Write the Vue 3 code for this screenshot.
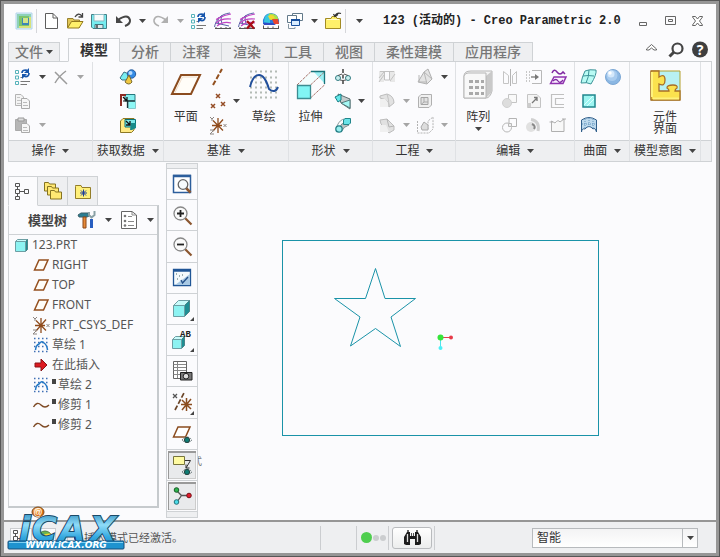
<script setup>
import { h, ref } from 'vue'

const P = (d, stroke, w = 1, extra = '') =>
  `<path d="${d}" fill="none" stroke="${stroke}" stroke-width="${w}" ${extra}/>`
const S = (d, fill, stroke = 'none', extra = '') =>
  `<path d="${d}" fill="${fill}" stroke="${stroke}" ${extra}/>`
const C = (x, y, r, fill, stroke = 'none') =>
  `<circle cx="${x}" cy="${y}" r="${r}" fill="${fill}" stroke="${stroke}"/>`

// A box seen from the front: corner, face size and depth.
const cube = (x, y, s, d = 4) =>
  S(`M${x} ${y + d}L${x + d} ${y}H${x + s + d}L${x + s} ${y + d}Z`, '#c9fbfa', '#6d9fa4') +
  S(`M${x + s} ${y + d}L${x + s + d} ${y}V${y + s}L${x + s} ${y + s + d}Z`, '#1e8e93', '#4a8589') +
  S(`M${x} ${y + d}H${x + s}V${y + s + d}H${x}Z`, '#8df3f2', '#6d9fa4')
const eye = (x, y) =>
  P(`M${x - 5} ${y}Q${x} ${y - 6} ${x + 5} ${y}Q${x} ${y + 5} ${x - 5} ${y}`, '#68787a', 1, 'stroke-dasharray="2 1"') +
  C(x, y, 2.6, '#0f7c74', '#26433f')
const plane = S('M3.500 15L8 5H17L12.500 15Z', '#fffdf8', '#95501f', 'stroke-width="1.500"')
const csys = P('M10 3V18M4 10.500H14M5 5.500L15 15.500M15 4.500L5 16', '#8f4b1c', 1.300) +
  P('M2 2l2 2 2-2M4 4v2M15.500 9l3 3m0-3l-3 3M2 15h4l-4 4h4', '#8b8480')
const mesh = P('M17 2C8 3 3 8 1.500 16M9 4Q7 8 9 13M6 6Q4 9 6 14M3 12L16 15', '#5a62a8') +
  P('M18 3C9 4 5 8 3 8.500M18 8Q8 7 3 12M18 12Q10 10 4 15', '#c044c4', 1.200) +
  P('M2 17.500H18M3 16v2M8 16v2M13 16v2M17 16v2', '#555')

const icons = {
  app: S('M2 2H18V18H2Z', '#d8eef6', '#b4d4ea') + S('M3 3H17V6H6V17H3Z', '#8ed1b8') + S('M5 5H15V16H5Z', '#7cc46c') + S('M8 7H15V14H8Z', '#3c85b6') + S('M9 7H14V12H9Z', '#d3e48a') + P('M5 16H16V6', '#d8e27a', 2),
  doc: S('M4.500 2.500H12L16.500 7V17.500H4.500Z', '#fff', '#5d5d5d') + P('M12 2.500V7H16.500', '#5d5d5d'),
  open: S('M2.500 16.500V7.500H8L9 9H14.500V16.500Z', '#e2c655', '#97802e') + S('M2.500 17L6.500 10.500H18L14 17Z', '#fff06a', '#92781d') + P('M10 6Q13 1 17 5M13.500 6H17.500V2', '#444', 1.300),
  save: S('M2.500 3.500H17.500V17.500H4L2.500 16Z', '#75edf0', '#447f87') + S('M5 3.500H15V10H5Z', '#f7fbfb', '#8bbbc3') + S('M6 13.500H14V17.500H6Z', '#dfe7e9', '#41747e') + P('M8 14V17', '#444', 1.500),
  undo: P('M5 9Q15 2 17 9Q17.500 13 12 15', '#474747', 2) + S('M3 5V12H10Z', '#474747'),
  redo: P('M15 9Q5 2 3 9Q2.500 13 8 15', '#b0b0b0', 1.600) + S('M17 5V12H10Z', '#b0b0b0'),
  regen: P('M2.500 3.500h3v3h-3zM2.500 9h3v3h-3zM2.500 14.500h3v3h-3z', '#57b3ba') + P('M7.500 10.500h2M7.500 14.500H17M7.500 17.500H14', '#777') + P('M9 6Q9 3 13 3L15 4M16 6Q16 10 12 9.500L10 8.500', '#1856ac', 1.700) + S('M16 1V6H11ZM9 12V7H14Z', '#1856ac'),
  mesh,
  meshx: mesh + P('M10 10L17 17.500M17 10L10 17.500', '#a90d16', 2.300),
  color: S('M2 13Q1 3 10 2Q19 3 18 13Z', '#287cdd') + S('M3 11Q3 3 9 2.500L9 12Z', '#39c8de') + S('M8 2.500Q17 2 17.500 9L10 9Z', '#a8e04a') + S('M7 5Q12 2 14 7L9 9Z', '#f2d82e') + S('M11 8L17 8L18 13H13Z', '#e8452f') + S('M2 12H12L15 14H3Z', '#314bc3') + P('M2 17.500H18M2.500 14.500v3M7 15.500v2M12 15.500v2M17.500 14.500v3', '#555'),
  windows: S('M7.500 2.500H17.500V9.500H7.500Z', '#fff', '#62798a') + S('M2.500 4.500H11.500V11.500H2.500Z', '#fff', '#62798a') + S('M6.500 8.500H14.500V14.500H6.500Z', '#d8ecff', '#174f9d') + P('M6 9H15', '#174f9d', 2) + P('M3.500 13V17.500H10V16', '#8596a2'),
  folder: S('M2.500 7.500H8L9 5.500H13L14 7.500H17.500V17.500H2.500Z', '#fff06a', '#a28b25') + P('M4 8.500H16', '#fffbd0') + P('M18 2.500Q14 1 12 5M10.500 3l1.500 2.500 3-2', '#333', 1.300),
  min: P('M5.500 11.500H12.500V14.500H5.500Z', '#666'),
  max: P('M4.500 5.500H14.500V13.500H4.500ZM7.500 8.500H11.500V10.500H7.500Z', '#666'),
  close: S('M4.500 5.500H7.500L9.500 8L11.500 5.500H14.500V6L11.500 10L14.500 14V14.500H11.500L9.500 12L7.500 14.500H4.500V14L7.500 10L4.500 6Z', '#fff', '#666'),
  up: S('M4.500 9V8L9.500 3.500L14.500 8V9H12L9.500 7L7 9Z', '#fff', '#666'),
  search: P('M8 11L3.500 15.500', '#444', 3) + `<circle cx="11.500" cy="7.500" r="5" fill="none" stroke="#444" stroke-width="2.200"/>`,
  help: C(10, 8.500, 8, '#3f3f3f') + `<text x="10" y="13.500" fill="#fff" font-size="14" font-weight="700" text-anchor="middle">?</text>`,

  cut: P('M4 5L16 17M15 4Q8 9 4 16', '#9b9b9b', 1.500),
  copy: S('M2.500 3.500H8L10.500 6V14.500H2.500Z', '#f4f4f4', '#b3b3b3') + P('M4 6.500h3M4 9.500h4M4 12.500h4', '#c4c4c4') + S('M8.500 7.500H14L16.500 10V17.500H8.500Z', '#f7f7f7', '#aaa') + P('M10 11.500h4M10 14.500h5', '#bbb'),
  paste: S('M2.500 4.500H13.500V15.500H2.500Z', '#b6b6b6', '#aaa') + S('M5 3H11V6H5Z', '#ddd', '#999') + S('M8.500 8.500H14L16.500 11V17.500H8.500Z', '#f7f7f7', '#aaa') + P('M10 12.500h4M10 15.500h5', '#bbb'),
  shapes: S('M2 11L6 5L11 7L9 13H4Z', '#77edf0', '#3d6f82') + C(13.500, 7, 4.200, '#348be5', '#275b9b') + C(12.500, 6, 2, '#b7dcff') + S('M7 15L11 8L14 15Q11 19 7 15Z', '#f0c842', '#796b2f'),
  merge: S('M7 3.500H17V10H7Z', '#84eff0', '#26777d') + S('M10.500 9.500H17.500V17.500H10.500Z', '#8cf7f5', '#86c9cc') + P('M3 15V4H8', '#8c2c24', 2) + P('M9.500 17V10H17', '#17363a', 1.300) + P('M5 6L9 10M9 6V10H5', '#111', 1.200),
  shrink: S('M2.500 6L5 3.500H16V15L13.500 17.500H2.500Z', '#ffe983', '#8c7825') + S('M7 4.500H17.500V12H7Z', '#7de9e9', '#0b7377') + S('M13 8H18V13L14 15H12Z', '#188a8a') + P('M8 6L12 10M12 6V10H8', '#111', 1.300),
  axis: P('M5 18L14 2', '#92501f', 2, 'stroke-dasharray="5 2"'),
  points: P('M8 3l4 4m0-4l-4 4M3 13l4 4m0-4l-4 4M13 11l4 4m0-4l-4 4', '#944c25', 1.500),
  csys,
  plane,
  bigplane: S('M2 25L11 6H30L21 25Z', '#fffdf8', '#8b4c1f', 'stroke-width="2"') + P('M5 23.500L12.500 8H27', '#f0dcc8'),
  bigsketch: P('M2 2.500H30M2 8.500H30M2 13.500H30M2 18.500H30M2 23.500H30M2 28.500H30', '#b4bbb6', 2, 'stroke-dasharray="2 3"') + P('M2 18Q5 6 11 6T21 20Q27 25 30 18', '#214f9b', 2),
  extrude: S('M2 16L17 2H30L15 16Z', '#f4fdfd') + S('M18 2H30V15Z', '#9deff3') + P('M2 16L16 2.500M15.500 29L30 15.500M15.500 16L30 2.500', '#a67068', 1, 'stroke-dasharray="3 1"') + P('M16 2.500H29.500V15', '#19747a', 1.300) + S('M2.500 16.500H15.500V29.500H2.500Z', '#81f5f4', '#3c8c91', 'stroke-width="1.300"'),
  revolve: P('M10 2V18', '#222', 1.300, 'stroke-dasharray="4 1.500"') + `<circle cx="5" cy="11" r="2.500" fill="#c9eeee" stroke="#347d82"/><circle cx="15" cy="11" r="2.500" fill="#c9eeee" stroke="#347d82"/>` + P('M5 8.500L9 7M15 8.500L11 7M7 13Q10 14 13 13', '#555'),
  blend: S('M5 3L17 8V18L8 12Z', '#c4cccd', '#5d6e70') + S('M2 6L8 3L8 9L5 11Z', '#65e8ea', '#187d83') + S('M8 12L17 9V17Z', '#a5f8f4', '#567d7e'),
  sweep: P('M4 11Q7 4 12 4', '#8b9b9c') + S('M8 17Q11 11 16 10L12 8Q8 8 7 12Z', '#b9c3c4', '#7c8c8d') + S('M10.500 5L12 3.500H17.500V8L16 9.500H10.500Z', '#69e3e8', '#21868b') + `<circle cx="6" cy="14" r="3.200" fill="#9aefef" stroke="#258087" stroke-width="1.300"/>`,
  hole: S('M2 4H7V15H2ZM13 4H18V15H13Z', '#e8e8e8') + P('M3 4.500H17M7.500 5V13H12.500V5M2 15L7 8M2 11L7 5M13 14L18 7', '#c2c2c2'),
  round: S('M3 5L10 3Q17 5 17 12L12 16Q13 9 3 7Z', '#e2e2e2', '#bdbdbd') + S('M3 8H8Q12 11 11 16H3Z', '#f0f0f0') + P('M10 3Q12 8 12 16', '#c4c4c4'),
  chamfer: S('M3 5L10 4L17 11V15L12 18L4 9Z', '#e1e1e1', '#bdbdbd') + S('M3 10H9L12 17H3Z', '#f0f0f0') + P('M10 4L12 12L17 11', '#b4b4b4'),
  draft: S('M3 15L9 5L13 2L17 12L12 17Z', '#e4e4e4', '#b0b0b0') + P('M9 5L12 17M4 8V15H12M9 5L17 12', '#b6b6b6'),
  shell: S('M3.500 6L6 3.500H16.500V14L14 16.500H3.500Z', '#f0f0f0', '#b0b0b0') + S('M6 6.500H13V13.500H6Z', '#e2e2e2', '#a4a4a4') + P('M9 7V11H13M6 13.500L9 11', '#aaa'),
  rib: P('M2.500 6V18H14L18 14V2L13 6V14', '#b4b4b4', 1, 'stroke-dasharray="2 1"') + S('M6 12L9 7L13 10V15H7Z', '#ddd', '#aaa'),
  pattern: S('M2 7Q2 2 9 2H30V22Q28 29 24 29H2Z', '#f4f4f4', '#b6b6b6') + S('M24 7L30 2V23L24 29Z', '#c9c9c9') + S('M2 7Q3 4 6 4H24V29H2Z', '#f8f8f8', '#b6b6b6') + P('M7 12.500h15M7 18.500h15M7 24.500h15', '#a9a9a9', 3, 'stroke-dasharray="4 2"'),
  mirror: P('M3.500 4.500L8.500 8.500V16.500H3.500ZM16.500 4.500L12.500 8.500V16.500H16.500Z', '#c4c4c4') + P('M10.500 2V19', '#b4b4b4'),
  extend: P('M8 3.500H17.500V16.500H8', '#b8b8b8') + P('M2.500 4V16M5.500 4V16', '#c8c8c8', 1, 'stroke-dasharray="2 1"') + P('M7 10H13', '#777', 1.300) + S('M11 7L15 10L11 13Z', '#777'),
  project: P('M4 6Q6 1 9 5T15 5L17 7', '#8129a2', 1.500) + S('M2.500 16.500L6 10H18L15 16.500Z', '#faf0ff', '#8e32ae', 'stroke-width="1.500"') + P('M5 14Q8 11 10 14T15 13', '#8129a2', 1.300),
  merge2: S('M8.500 3.500H16.500V11.500H8.500Z', '#f9f9f9', '#c4c4c4') + C(7, 12, 4.500, '#ddd', '#d0d0d0'),
  trim: S('M3.500 3.500H13L16.500 7V16.500H3.500Z', '#f4f4f4', '#c4c4c4') + P('M8 12L13 7M13 10V6.500H10', '#777', 1.300) + S('M3 12H7V16H3Z', '#ccc'),
  offset: P('M16 3.500H3.500V16.500H16M16 7.500H7.500V13.500H16', '#c0c0c0', 1.200),
  intersect: P('M9 8V3.500H16.500V11.500H12', '#b4b4b4') + `<circle cx="7" cy="12.500" r="4.500" fill="none" stroke="#b8b8b8"/>` + S('M8.500 8.500H11.500V11.500H8.500Z', '#eee', '#b8b8b8'),
  thicken: C(7, 12, 5, '#e1e1e1') + P('M7 4.500Q16 6 14 16', '#d0d0d0', 3) + P('M8 9Q12 11 10 14', '#888', 2),
  fill: S('M3.500 6L7 8Q10 4 12 7L16 4V16.500H3.500Z', '#f8f8f8', '#b0b0b0') + P('M1.500 7H5M14 4H18', '#b0b0b0'),
  boundary: S('M6 4Q10 2 17 3Q18 7 12 17Q8 15 2 16Q3 10 6 4Z', '#b8fbf4', '#3c9398') + P('M10 3Q10 10 7 16M4 9Q9 8 15 9', '#3c9398'),
  fillsurf: S('M4 4H16V16H4Z', '#9df5f1', '#21878d', 'stroke-width="1.500"') + P('M5 14L14 5M8 15L15 8', '#d9ffff'),
  style: S('M2.500 17V5Q10 0 17.500 5V17Q16 12 14 14Q10 9 6 14Q3 13 2.500 17Z', '#bdd9ed', '#315f8b') + P('M6 4V13M10 3V12M14 4V13M3 9H17', '#6395bd', 1, 'stroke-dasharray="1 1"'),
  sphere: C(10, 10, 7.500, '#8bb7e3', '#7ba7d5') + C(9, 8.500, 5.500, '#a9ccef') + C(8, 7, 3.500, '#d4e8fb') + C(7, 6, 1.700, '#fff'),
  intent: S('M2 2H31V31H2Z', '#b8f1f2', '#b3a02c') + S('M2 2H10V8Q16 4 16 11Q16 18 10 15V22H20Q20 20 18 19Q18 16 24 16Q29 16 28 19Q26 20 26 22H31V31H2Z', '#fbe24e', '#a76f28', 'stroke-width="1.300"') + P('M3 28V3M4 29.500H30', '#fff27c', 2),

  tree: P('M2.500 2.500h4v3h-4zM2.500 8.500h4v4h-4zM2.500 15.500h4v3h-4zM11.500 8.500h4v4h-4zM7 10.500h4M4.500 6v2M4.500 13v2', '#555'),
  folders: [[1, 1], [4, 5], [7, 9]].map(([x, y]) => S(`M${x + .5} ${y + .5}h4l1 1.500h6v7h-11z`, '#ffe873', '#857322')).join(''),
  fav: S('M2.500 5.500V4.500H8L9 6.500H17.500V17.500H2.500Z', '#fff07a', '#937d29') + P('M10.500 8.500v7M7 12h7M8 9.500l5 5M13 9.500l-5 5', '#1c3c9b'),
  tools: S('M1 5L4 3H11L12 6L10 7H2Z', '#2b7d91', '#3b616b') + S('M6 7H9V18H6Z', '#e78a38', '#8b481b') + P('M14.500 9V18', '#285ec0', 3) + P('M12 2V5L14.500 7.500L17.500 5V1', '#8aa1a5', 2),
  list: S('M2.500 1.500H13L17.500 5V18.500H2.500Z', '#fff', '#666') + C(6, 6, 1.300, '#777') + C(6, 11, 1.300, '#777') + C(6, 15.500, 1.300, '#777') + P('M9 6.500h4M9 11.500h6M9 15.500h6', '#888') + P('M13 2V5H17', '#888'),
  part: cube(4.5, 4.5, 10, 2),
  sketch: P('M3 3.500H17M3 7.500H17M3 11.500H17M3 16.500H17', '#3f6fb5', 1.500, 'stroke-dasharray="1.500 2.500"') + P('M4.500 15Q5 10 8 9Q11 5 13 8Q16 10 16.500 15', '#2579c6', 1.500),
  insert: S('M4 8H10V4L16 10L10 16V12H4Z', '#dc1a20', '#8a1418'),
  wave: P('M2.500 12Q6 6 10 10T18 10', '#7e4a24', 1.400),

  zoomfit: S('M3.500 3.500H20.500V20.500H3.500Z', '#fff', '#2c5e9c', 'stroke-width="1.500"') + P('M3 4H21', '#2c5e9c', 2.500) + P('M16 16L20.500 20.500', '#8b562f', 2.500) + `<circle cx="13" cy="12.500" r="4.800" fill="#f7fbfd" stroke="#666" stroke-width="1.300"/>`,
  zoomin: P('M15 15L21.500 21.500', '#8b562f', 2.200) + `<circle cx="10.500" cy="10.500" r="6.500" fill="#fafafa" stroke="#888" stroke-width="1.300"/>` + P('M7 10.500H14M10.500 7V14', '#222', 1.800),
  zoomout: P('M15 15L21.500 21.500', '#8b562f', 2.200) + `<circle cx="10.500" cy="10.500" r="6.500" fill="#fafafa" stroke="#888" stroke-width="1.300"/>` + P('M7 10.500H14', '#222', 1.800),
  repaint: S('M3.500 3.500H20.500V19.500H3.500Z', '#f4fafd', '#205696', 'stroke-width="1.300"') + S('M5 19L20 8V19Z', '#a9c9e4') + P('M3 4.500H21', '#205696', 2.500) + P('M11 14L12.500 17L18 11', '#24508a', 1.300) + P('M6 8h1M9 10h1M7 13h1M12 9h1', '#466', 1),
  display: cube(3.5, 3.5, 11, 5),
  saved: cube(2.5, 8.5, 9, 3) + `<text x="10" y="9" font-size="9" font-family="Liberation Mono" font-weight="700" fill="#222">AB</text>`,
  capture: S('M3.500 2.500H16.500V19.500H3.500Z', '#fff', '#666') + P('M3.500 5.500H16M3.500 8.500H16M3.500 11.500H16M3.500 15.500H16M7.500 3V19', '#888') + S('M10.500 13.500H22V21H10.500Z', '#777', '#222') + C(16, 17.200, 2.800, '#ddd', '#222'),
  datum: P('M3 4l4 4m0-4l-4 4', '#555', 1.300) + P('M5 20L14 3', '#6b4528', 1.700, 'stroke-dasharray="5 2"') + P('M16.500 8V21M11 14.500H22M12 10L21 19M21 9L12 20', '#8b4c1f', 1.500),
  planeeye: S('M3.500 15L8 5H20L15.500 15Z', '#fff', '#8b4c1f', 'stroke-width="1.500"') + eye(17, 18),
  note: S('M3.500 3.500H14.500V11.500H3.500Z', '#fffba2', '#77743c') + P('M15 7.500H20.500L16 15M16 11.500V15H19.500', '#333') + eye(17, 19),
  spin: P('M6 6L11.500 11.500L18 11.500M11.500 11.500L7 18', '#555', 1.300) + C(6.500, 6, 2.300, '#2db34a', '#165b29') + C(19, 11.500, 2.300, '#e01b2c', '#751017') + C(6.500, 18, 2.300, '#4cdbe8', '#23717a'),
  find: P('M7 3V6M16 3V6', '#333', 1.500) + S('M3 10L6 5H9V9H14V5H17L20 10V17L18 18H14V12H9V18H5L3 17Z', '#1c1c1c') + P('M6.500 7V15M16.500 7V15', '#ddd', 1.300) + P('M10.500 6V9M12.500 6V9', '#555'),
  globe: C(10, 10, 7, '#6bb552', '#4d7a45') + S('M3 9Q7 3 11 7T17 9Q13 17 5 14Z', '#2b7fa8') + P('M3 13Q8 6 16 7', '#f4dd2c', 2.500),
}

const Icon = ({ name, size = 20 }) =>
  h('svg', {
    class: 'icon', width: size, height: size, viewBox: `0 0 ${size} ${size}`,
    'aria-hidden': 'true', innerHTML: icons[name],
  })
Icon.props = ['name', 'size']

const Caret = ({ dim }) =>
  h('svg', { class: 'icon', width: 7, height: 4, viewBox: '0 0 7 4', 'aria-hidden': 'true' }, [
    h('path', { d: 'M0 0H7L3.500 4Z', fill: dim ? '#a5a5a5' : '#444' }),
  ])
Caret.props = ['dim']

const quick = [
  { i: 'app', t: 'Creo', sep: true },
  { i: 'doc', t: '新建' }, { i: 'open', t: '打开' }, { i: 'save', t: '保存' },
  { i: 'undo', t: '撤消', menu: 'on' }, { i: 'redo', t: '重做', menu: 'dim' },
  { i: 'regen', t: '重新生成' }, { i: 'mesh', t: '网格' }, { i: 'meshx', t: '删除网格' },
  { i: 'color', t: '着色' }, { i: 'windows', t: '窗口', menu: 'on' }, { i: 'folder', t: '关闭', sep: true },
]

const tabs = ['模型', '分析', '注释', '渲染', '工具', '视图', '柔性建模', '应用程序']
const activeTab = ref('模型')

// Every group body is a run of columns: a large button, a stack of small ones, or a stack of carets.
const groups = [
  { name: '操作', cols: [
    { icons: ['regen', 'copy', 'paste'] }, { carets: ['on', '', 'dim'] },
    { icons: ['cut'] }, { carets: ['dim'] }] },
  { name: '获取数据', center: true, cols: [{ icons: ['shapes', 'merge', 'shrink'] }] },
  { name: '基准', cols: [
    { big: 'bigplane', label: ['平面'] }, { icons: ['axis', 'points', 'csys'] },
    { carets: ['', 'on'] }, { big: 'bigsketch', label: ['草绘'] }] },
  { name: '形状', cols: [
    { big: 'extrude', label: ['拉伸'] }, { icons: ['revolve', 'blend', 'sweep'] }, { carets: ['', 'on'] }] },
  { name: '工程', cols: [
    { icons: ['hole', 'round', 'chamfer'] }, { carets: ['', 'dim', 'dim'] },
    { icons: ['draft', 'shell', 'rib'] }, { carets: ['on', '', 'dim'] }] },
  { name: '编辑', cols: [
    { big: 'pattern', label: ['阵列'], menu: true }, { icons: ['mirror', 'merge2', 'intersect'] },
    { icons: ['extend', 'trim', 'thicken'] }, { icons: ['project', 'offset', 'fill'] }] },
  { name: '曲面', cols: [{ icons: ['boundary', 'fillsurf', 'style'] }, { icons: ['sphere'] }] },
  { name: '模型意图', center: true, cols: [{ big: 'intent', label: ['元件', '界面'] }] },
]

const tree = [
  { i: 'part', t: '123.PRT', root: true },
  { i: 'plane', t: 'RIGHT' }, { i: 'plane', t: 'TOP' }, { i: 'plane', t: 'FRONT' },
  { i: 'csys', t: 'PRT_CSYS_DEF' }, { i: 'sketch', t: '草绘 1' }, { i: 'insert', t: '在此插入' },
  { i: 'sketch', t: '草绘 2', held: true }, { i: 'wave', t: '修剪 1', held: true }, { i: 'wave', t: '修剪 2', held: true },
]

const panes = [{ i: 'tree', t: '模型树' }, { i: 'folders', t: '文件夹浏览器' }, { i: 'fav', t: '收藏夹' }]
const activePane = ref('tree')

const view = [
  { i: 'zoomfit', t: '重新调整' }, { i: 'zoomin', t: '放大' }, { i: 'zoomout', t: '缩小' },
  { i: 'repaint', t: '重画' }, { i: 'display', t: '显示样式', more: true }, { i: 'saved', t: '已命名视图', more: true },
  { i: 'capture', t: '视图管理器' }, { i: 'datum', t: '基准显示', more: true }, { i: 'planeeye', t: '平面显示' },
  { i: 'note', t: '注释显示', on: true }, { i: 'spin', t: '旋转中心', on: true },
]
const filter = ref('智能')
</script>

<template>
  <div class="window">
    <header class="titlebar">
      <div class="quick">
        <template v-for="q in quick" :key="q.i">
          <button class="tool" :aria-label="q.t"><Icon :name="q.i" /></button>
          <button v-if="q.menu" class="drop" :aria-label="q.t + '列表'"><Caret :dim="q.menu === 'dim'" /></button>
          <i v-if="q.sep" class="sep"></i>
        </template>
        <button class="drop" aria-label="自定义"><Caret /></button>
      </div>
      <h1>123 (活动的) - Creo Parametric 2.0</h1>
      <div class="wincontrols">
        <button class="tool" aria-label="最小化"><Icon name="min" /></button>
        <button class="tool" aria-label="最大化"><Icon name="max" /></button>
        <button class="tool" aria-label="关闭窗口"><Icon name="close" /></button>
      </div>
    </header>

    <nav class="tabs">
      <button class="tab file">文件<Caret /></button>
      <button v-for="t in tabs" :key="t" class="tab" :class="{ active: t === activeTab }" @click="activeTab = t">{{ t }}</button>
      <div class="helpers">
        <button class="tool" aria-label="最小化功能区"><Icon name="up" /></button>
        <button class="tool" aria-label="搜索"><Icon name="search" /></button>
        <button class="tool" aria-label="帮助"><Icon name="help" /></button>
      </div>
    </nav>

    <section class="ribbon">
      <div v-for="g in groups" :key="g.name" class="group">
        <div class="body" :class="{ center: g.center }">
          <template v-for="(c, n) in g.cols" :key="n">
            <button v-if="c.big" class="big">
              <Icon :name="c.big" :size="32" />
              <span v-for="l in c.label" :key="l">{{ l }}</span>
              <Caret v-if="c.menu" />
            </button>
            <div v-else-if="c.icons" class="stack">
              <button v-for="i in c.icons" :key="i" class="tool" :aria-label="g.name"><Icon :name="i" /></button>
            </div>
            <div v-else class="stack narrow">
              <span v-for="(k, m) in c.carets" :key="m"><Caret v-if="k" :dim="k === 'dim'" /></span>
            </div>
          </template>
        </div>
        <button class="caption">{{ g.name }}<Caret /></button>
      </div>
      <div class="group"><div class="body"></div><div class="caption"></div></div>
    </section>

    <main class="work">
      <aside class="side">
        <div class="panes">
          <button v-for="p in panes" :key="p.i" class="pane" :class="{ active: p.i === activePane }" :aria-label="p.t" @click="activePane = p.i">
            <Icon :name="p.i" />
          </button>
        </div>
        <div class="panel">
          <div class="panelhead">
            <h2>模型树</h2>
            <button class="tool" aria-label="设置"><Icon name="tools" /></button>
            <button class="drop" aria-label="设置列表"><Caret /></button>
            <button class="tool" aria-label="显示"><Icon name="list" /></button>
            <button class="drop" aria-label="显示列表"><Caret /></button>
          </div>
          <ul class="tree">
            <li v-for="r in tree" :key="r.t" :class="{ root: r.root, held: r.held }">
              <Icon :name="r.i" /><span>{{ r.t }}</span>
            </li>
          </ul>
        </div>
      </aside>

      <div class="viewbar">
        <i class="grip"></i>
        <button v-for="v in view" :key="v.i" :class="{ on: v.on, more: v.more }" :aria-label="v.t"><Icon :name="v.i" :size="24" /></button>
        <i class="grip"></i>
      </div>

      <svg class="canvas" viewBox="0 0 518 358" preserveAspectRatio="xMidYMin meet">
        <rect x="84.500" y="78.500" width="316" height="195" />
        <path d="M177.500 106.500L187 136.500H217.500L193 155L202.500 184.500L177.500 166.500L152.500 184L162 155L136.500 136.500H167.500Z" />
        <line x1="243" y1="175.500" x2="253" y2="175.500" class="xaxis" />
        <line x1="242.500" y1="176" x2="242.500" y2="186" class="yaxis" />
        <circle cx="253" cy="175.500" r="2" class="xend" />
        <circle cx="242.500" cy="186" r="2" class="yend" />
        <circle cx="242.500" cy="175.500" r="3" class="origin" />
        <text x="-6" y="303">式</text>
      </svg>
    </main>

    <footer class="status">
      <div class="modes">
        <button aria-label="导航器"><Icon name="tree" /></button>
        <button aria-label="浏览器"><Icon name="globe" /></button>
      </div>
      <i class="bullet"></i>
      <p>插入模式已经激活。</p>
      <div class="cell blank"></div>
      <div class="cell lights"><b></b><i></i><i></i></div>
      <div class="cell"><button class="find" aria-label="查找"><Icon name="find" :size="22" /></button></div>
      <div class="cell filter">
        <label>
          <select v-model="filter" aria-label="选择过滤器"><option>智能</option><option>几何</option></select>
          <span class="arrow"><Caret /></span>
        </label>
      </div>
      <svg class="logo" width="122" height="48" viewBox="0 0 122 48" role="img" aria-label="iCAX">
        <defs>
          <linearGradient id="ink" x1="0" y1="0" x2="0" y2="1">
            <stop offset="0" stop-color="#1f7fb4" /><stop offset="0.400" stop-color="#8fdcf8" /><stop offset="0.700" stop-color="#35a9e0" /><stop offset="1" stop-color="#1a82bd" />
          </linearGradient>
          <radialGradient id="ball" cx="0.400" cy="0.300"><stop offset="0" stop-color="#ffd48a" /><stop offset="1" stop-color="#dc6a0c" /></radialGradient>
        </defs>
        <text x="13 26 53 84" y="36" class="mark">iCAX</text>
        <rect x="2" y="36" width="116" height="8" rx="1" fill="#1f93cf" stroke="#164c78" />
        <path d="M3 37.500H117" stroke="#7fd0f2" />
        <ellipse cx="32" cy="7" rx="6" ry="5" fill="url(#ball)" stroke="#7a4a20" />
        <text x="32" y="10" class="at">@</text>
        <text x="60" y="43" class="url">WWW.iCAX.ORG</text>
      </svg>
    </footer>
  </div>
</template>

<style>
body { margin: 0; }
</style>

<style scoped>
.window {
  --line: #cfd2d5;
  --bar: #eeeff1;
  --page: #fbfbfd;
  --frame: #969696;
  box-sizing: border-box;
  min-height: 100vh;
  display: flex;
  flex-direction: column;
  border: 1px solid #575757;
  outline: 3px solid var(--frame);
  outline-offset: -4px;
  padding: 3px;
  background: var(--page);
  color: #444;
  font: 12px/16px "Noto Sans", "Noto Sans CJK SC", sans-serif;
}
.window * { box-sizing: border-box; }
button {
  border: 0;
  padding: 0;
  background: none;
  color: inherit;
  font: inherit;
  display: flex;
  align-items: center;
  justify-content: center;
}
.icon { display: block; flex: none; }
.tool { width: 24px; height: 24px; flex: none; }
.drop { width: 14px; height: 24px; flex: none; }
h1, h2, p, ul { margin: 0; padding: 0; font-weight: inherit; }

.titlebar { height: 35px; display: flex; align-items: center; padding: 0 6px 2px 8px; }
.quick { display: flex; align-items: center; }
.sep { width: 1px; height: 24px; margin: 0 2px 0 0; background: #d5d6da; }
.quick .sep:last-of-type { margin: 0 6px 0 0; }
.titlebar h1 {
  flex: 1;
  padding-left: 17px;
  white-space: nowrap;
  color: #222;
  font: bold 12px/16px "Liberation Mono", "Noto Sans CJK SC", monospace;
}
.wincontrols { display: flex; gap: 3px; }

.tabs { height: 23px; display: flex; align-items: flex-end; padding: 0 4px; margin-bottom: -1px; z-index: 1; }
.tab {
  height: 20px;
  padding: 0 11px;
  border: 1px solid var(--line);
  border-left-width: 0;
  background: var(--bar);
  color: #777;
  font-size: 14px;
  font-weight: 500;
  white-space: nowrap;
}
.tab.file { gap: 3px; padding: 0 6px; margin-right: 8px; border-left-width: 1px; }
.tab.active { height: 24px; border-left-width: 1px; border-bottom-color: var(--page); background: var(--page); color: #333; font-weight: 700; }
.helpers { flex: 1; display: flex; justify-content: flex-end; align-self: center; }

.ribbon {
  height: 101px;
  margin: 0 4px;
  display: grid;
  grid-template-columns: 83fr 71fr 125fr 85fr 83fr 119fr 55fr 71fr 11fr;
  border: 1px solid var(--line);
}
.group { display: flex; flex-direction: column; min-width: 0; }
.group + .group { border-left: 1px solid #dfe1e4; }
.body { height: 78px; display: flex; padding: 3px 0 0 2px; }
.body.center { justify-content: center; padding-left: 0; }
.stack { width: 24px; display: grid; grid-auto-rows: 24px; align-content: start; }
.stack.narrow { width: 14px; }
.stack span { display: flex; align-items: center; justify-content: center; }
.big { width: 40px; flex-direction: column; justify-content: flex-start; padding-top: 4px; line-height: 12px; color: #333; }
.big .icon + span { margin-top: 10px; }
.big span + .icon { margin-top: 4px; }
.caption { flex: 1; width: 100%; gap: 7px; border-top: 1px solid var(--line); background: var(--bar); color: #333; white-space: nowrap; }

.work { flex: 1; display: flex; }
.side { width: 151px; flex: none; margin: 14px 7px 12px 4px; display: flex; flex-direction: column; }
.panes { display: flex; margin-bottom: -1px; z-index: 1; }
.pane { width: 30px; height: 30px; border: 1px solid var(--line); background: var(--bar); }
.pane + .pane { border-left-width: 0; }
.pane.active { background: var(--page); border-bottom-color: var(--page); }
.panel { flex: 1; border: 1px solid var(--line); border-right: 2px solid #c6cacd; border-bottom: 2px solid #c6cacd; }
.panelhead { height: 29px; display: flex; align-items: center; justify-content: flex-end; gap: 2px; border-bottom: 1px solid var(--line); }
.panelhead h2 { font-size: 13px; font-weight: 700; margin-right: 6px; }
.tree { list-style: none; color: #555; }
.tree li { height: 20px; display: flex; align-items: center; gap: 1px; padding-left: 22px; white-space: nowrap; }
.tree li.root { padding-left: 2px; }
.tree li.held span { border-left: 4px solid transparent; padding-left: 2px; position: relative; }
.tree li.held span::before { content: ""; position: absolute; left: -4px; top: 2px; width: 4px; height: 5px; background: #444; }

.viewbar { width: 32px; flex: none; margin: 1px 0 2px; display: flex; flex-direction: column; border: 1px solid var(--line); }
.grip { height: 5px; background: var(--bar); }
.viewbar button { flex: 1; border-bottom: 1px solid var(--line); position: relative; }
.viewbar .grip:first-child { border-bottom: 1px solid var(--line); }
.viewbar button.on { box-shadow: inset 0 0 0 1px var(--page), inset 1px 2px 0 1px #999, inset -1px -1px 0 1px #ccc; background: #e9eaec; }
.viewbar button.more::after { content: ""; position: absolute; right: 3px; bottom: 3px; border: 2px solid #444; border-top-color: transparent; border-left-color: transparent; }

.canvas { flex: 1; min-width: 0; align-self: flex-start; overflow: hidden; display: block; }
.canvas rect, .canvas path { fill: none; stroke: #1a93a8; }
.canvas .xaxis { stroke: #e0404c; }
.canvas .yaxis { stroke: #4ee4ee; }
.canvas .xend { fill: #e63b48; }
.canvas .yend { fill: #4cf0f6; }
.canvas .origin { fill: #35e53a; }
.canvas text { font-size: 10px; fill: #777; }

.status { position: relative; height: 33px; display: flex; align-items: center; border-top: 2px solid var(--frame); background: var(--bar); }
.modes { display: flex; gap: 2px; width: 64px; padding-left: 6px; border-right: 1px solid #cbcdd0; }
.modes button { width: 22px; height: 20px; border: 1px solid #cbcdd0; background: var(--page); }
.bullet { width: 6px; height: 6px; margin: 0 4px 0 6px; border-radius: 50%; background: #1c2f9c; }
.status p { flex: 1; color: #555; font-size: 11px; white-space: nowrap; }
.cell { height: 24px; display: flex; align-items: center; border-left: 1px solid #cbcdd0; }
.blank { width: 36px; }
.lights { width: 32px; gap: 1px; padding-left: 4px; }
.lights b { width: 11px; height: 11px; border-radius: 50%; background: #4fce4f; }
.lights i { width: 6px; height: 6px; border-radius: 50%; background: #cbcdcf; }
.find { width: 40px; height: 22px; margin: 0 2px 0 3px; border: 1px solid #b9bbbe; border-radius: 3px; background: linear-gradient(#fff, #eceded); }
.filter { width: 282px; justify-content: flex-end; padding-right: 18px; }
.filter label { width: 166px; height: 20px; display: grid; grid-template-columns: 1fr 15px; border: 1px solid #b7babd; background: linear-gradient(#f3f3f4, #fff); }
.filter select {
  grid-area: 1 / 1 / 2 / 3;
  appearance: none;
  border: 0;
  margin: 0;
  padding: 0 4px;
  background: none;
  color: #333;
  font: inherit;
}
.filter .arrow { grid-area: 1 / 2; display: flex; align-items: center; justify-content: center; border-left: 1px solid #b7babd; pointer-events: none; }

.logo { position: absolute; left: 2px; bottom: 0; }
.mark {
  font: italic 700 34px "DejaVu Sans", sans-serif;
  fill: url(#ink);
  stroke: #1c4a68;
  stroke-width: 2px;
  paint-order: stroke;
}
.at { font: italic 700 9px "Liberation Sans", sans-serif; fill: #fff; text-anchor: middle; }
.url { font: italic 700 9px "DejaVu Sans", sans-serif; fill: #fff; text-anchor: middle; }
</style>
